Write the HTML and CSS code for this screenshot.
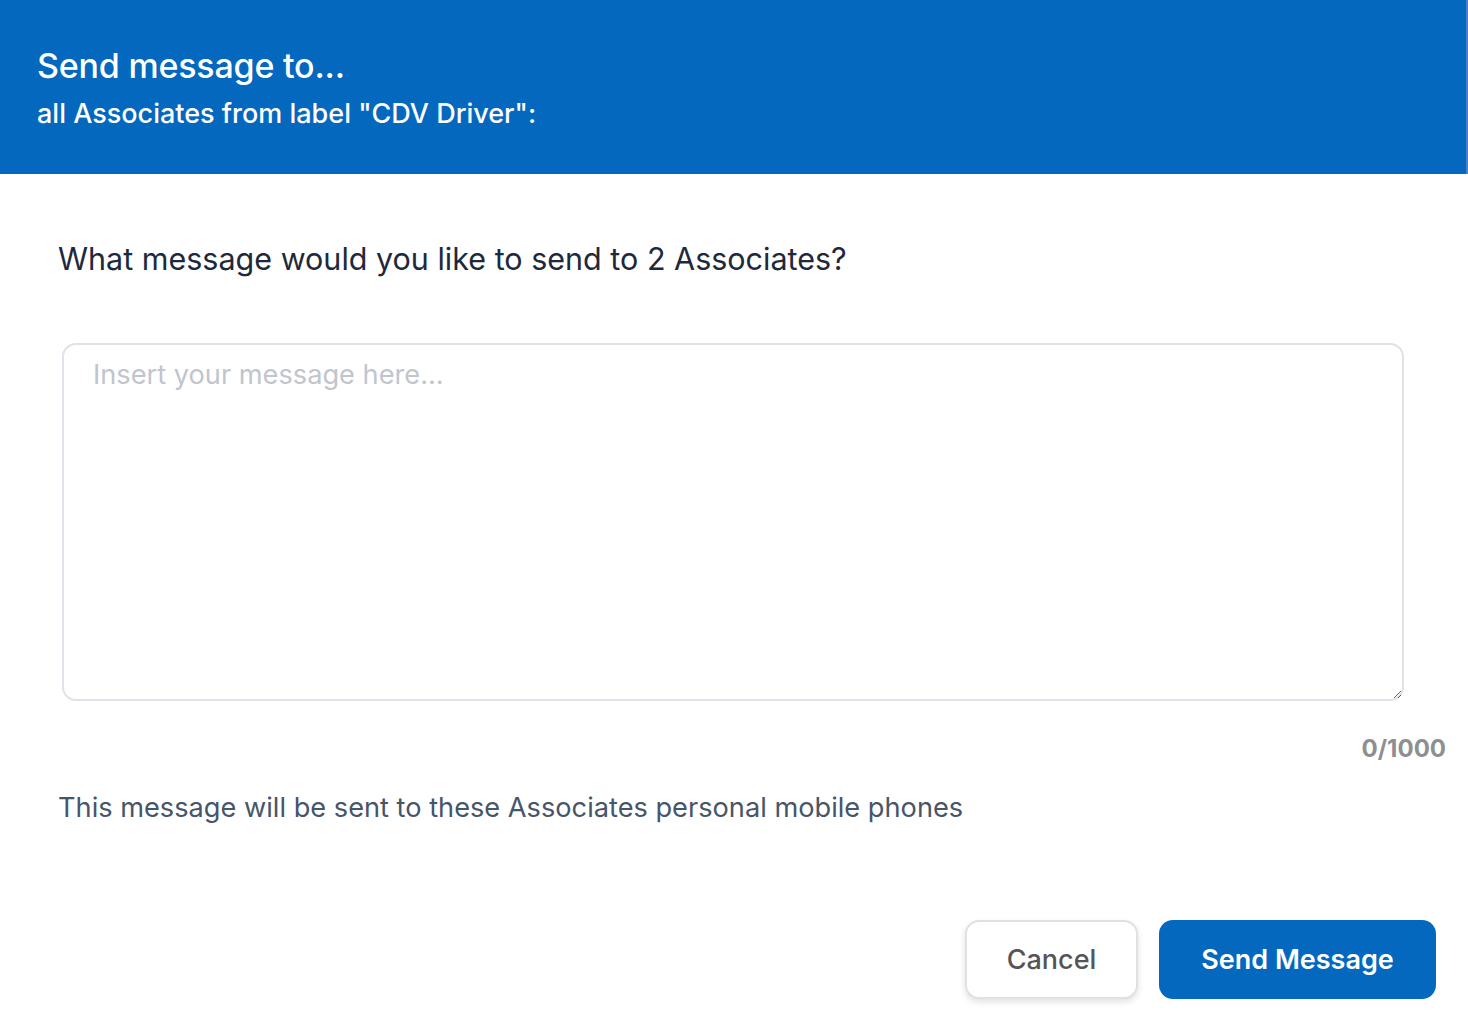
FILE: index.html
```html
<!DOCTYPE html>
<html>
<head>
<meta charset="utf-8">
<link rel="stylesheet" href="styles.css">
</head>
<body>
<div class="modal">
  <header class="header">
    <h1 class="title">Send message to...</h1>
    <p class="subtitle">all Associates from label "CDV Driver":</p>
  </header>
  <main class="content">
    <p class="question">What message would you like to send to 2 Associates?</p>
    <div class="field">
      <textarea class="message" placeholder="Insert your message here..."></textarea>
    </div>
    <div class="counter">0/1000</div>
    <p class="note">This message will be sent to these Associates personal mobile phones</p>
    <div class="actions">
      <button class="btn btn-cancel">Cancel</button>
      <button class="btn btn-send">Send Message</button>
    </div>
  </main>
</div>
</body>
</html>
```

FILE: styles.css
```css
* { box-sizing: border-box; }
html, body {
  margin: 0;
  padding: 0;
  background: #ffffff;
  font-family: Inter, "Noto Sans", sans-serif;
}
.modal {
  width: 1468px;
  height: 1028px;
  overflow: hidden;
}
.header {
  background: #0468be;
  height: 174px;
  padding: 44px 0 0 37px;
  color: #ffffff;
  border-right: 2px solid #4f82c0;
}
.title {
  margin: 0;
  font-size: 34px;
  font-weight: 500;
  line-height: 44px;
  letter-spacing: -0.2px;
}
.subtitle {
  margin: 9px 0 0;
  font-size: 27px;
  font-weight: 500;
  line-height: 34px;
}
.content {
  padding: 0 22px 0 58px;
}
.question {
  margin: 0;
  padding-top: 66px;
  font-size: 30.5px;
  line-height: 38px;
  color: #1e293b;
  font-weight: 400;
}
.field {
  margin-top: 65px;
  padding-left: 4px;
  padding-right: 42px;
}
.message {
  display: block;
  width: 100%;
  height: 358px;
  border: 2px solid #dfe2e8;
  border-radius: 14px;
  padding: 13px 29px;
  font-family: Inter, "Noto Sans", sans-serif;
  font-size: 27.2px;
  line-height: 34px;
  color: #1e293b;
  outline: none;
  resize: vertical;
}
.message::placeholder {
  color: #c0c5ce;
}
.counter {
  text-align: right;
  margin-top: 33px;
  font-size: 24px;
  font-weight: 700;
  line-height: 30px;
  color: #8e8e93;
}
.note {
  margin: 27px 0 0;
  font-size: 27.2px;
  line-height: 34px;
  color: #475569;
}
.actions {
  display: flex;
  justify-content: flex-end;
  gap: 21px;
  margin-top: 95px;
  padding-right: 10px;
}
.btn {
  font-family: Inter, "Noto Sans", sans-serif;
  font-size: 27px;
  font-weight: 500;
  border-radius: 14px;
  height: 79px;
  cursor: pointer;
}
.btn-cancel {
  width: 173px;
  background: #ffffff;
  color: #555558;
  border: 2px solid #dfe1e7;
  box-shadow: 0 3px 6px rgba(0, 0, 0, 0.12);
}
.btn-send {
  width: 277px;
  background: #0468be;
  color: #ffffff;
  border: none;
  font-weight: 600;
}
```
